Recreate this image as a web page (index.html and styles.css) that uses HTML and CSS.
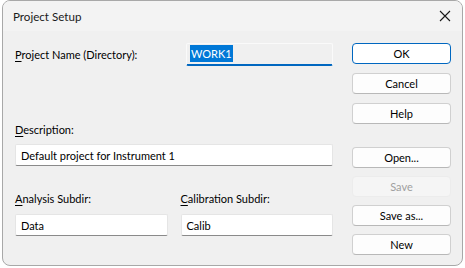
FILE: index.html
```html
<!DOCTYPE html>
<html lang="en">
<head>
  <meta charset="UTF-8" />
  <title>Project Setup</title>
  <link rel="stylesheet" href="styles.css">
</head>
<body>
  <div class="window">
    <div class="titlebar">
      <span class="title">Project Setup</span>
      <svg class="close" width="12" height="12" viewBox="0 0 12 12">
        <path d="M1 1 L11 11 M11 1 L1 11" stroke="#1a1a1a" stroke-width="1.1" fill="none" />
      </svg>
    </div>
    <div class="content">
      <div class="form">
        <div class="row-name">
          <label class="lbl"><u>P</u>roject Name (Directory):</label>
          <div class="field focused"><span class="sel">WORK1</span></div>
        </div>
        <label class="lbl desc-lbl"><u>D</u>escription:</label>
        <div class="field">Default project for Instrument 1</div>
        <div class="row-sub">
          <div class="col">
            <label class="lbl"><u>A</u>nalysis Subdir:</label>
            <div class="field">Data</div>
          </div>
          <div class="col">
            <label class="lbl"><u>C</u>alibration Subdir:</label>
            <div class="field">Calib</div>
          </div>
        </div>
      </div>
      <div class="buttons">
        <button class="btn default">OK</button>
        <button class="btn">Cancel</button>
        <button class="btn">Help</button>
        <button class="btn gap">Open...</button>
        <button class="btn" disabled>Save</button>
        <button class="btn">Save as...</button>
        <button class="btn">New</button>
      </div>
    </div>
  </div>
</body>
</html>
```

FILE: styles.css
```css
body {
  margin: 0;
  background: #ffffff;
  font-family: Lato, "Noto Sans", Arial, sans-serif;
  font-size: 11px;
  color: #000;
}
.window {
  margin: 0 2px;
  width: 459px;
  height: 264px;
  border: 1px solid #a8a8a8;
  border-radius: 8px;
  background: #f0f0f0;
  overflow: hidden;
}
.titlebar {
  height: 30px;
  background: #f3f3f3;
  display: flex;
  align-items: center;
  justify-content: space-between;
  padding: 0 10px 0 10px;
}
.title {
  font-size: 11.6px;
  color: #1a1a1a;
}
.close {
  margin-right: 1px;
}
.content {
  display: flex;
  padding: 12px 0 0 12px;
}
.form {
  width: 318px;
}
.lbl {
  display: block;
  line-height: 16px;
}
.lbl u {
  text-decoration-thickness: 1px;
  text-underline-offset: 2px;
}
.field {
  height: 22px;
  line-height: 21px;
  padding: 0 5px;
  background: #ffffff;
  border: 1px solid #e5e5e5;
  border-bottom-color: #8a8a8a;
  border-radius: 2px;
  box-sizing: border-box;
}
.row-name {
  display: flex;
  align-items: center;
  justify-content: space-between;
  height: 23px;
}
.row-name .field {
  width: 147px;
  height: 23px;
  background: #f0f0f0;
  border: 1px solid #fafafa;
  border-bottom: 2px solid #0067c0;
  padding: 0 3px;
  line-height: 19px;
}
.sel {
  background: #0078d7;
  color: #fff;
  padding: 2px 1px 2px 1px;
}
.desc-lbl {
  margin-top: 56px;
  margin-bottom: 6px;
}
.row-sub {
  display: flex;
  gap: 13px;
  margin-top: 25px;
}
.row-sub .col {
  flex: 1;
}
.row-sub .lbl {
  margin-bottom: 7px;
}
.buttons {
  margin-left: 19px;
  display: flex;
  flex-direction: column;
  gap: 9px;
}
.btn {
  width: 99px;
  height: 21px;
  padding: 0;
  font-family: Lato, "Noto Sans", Arial, sans-serif;
  font-size: 11px;
  color: #000;
  background: #fdfdfd;
  border: 1px solid #d0d0d0;
  border-bottom-color: #b8b8b8;
  border-radius: 4px;
}
.btn.default {
  border: 1px solid #0067c0;
  background: #fff;
}
.btn.gap {
  margin-top: 14px;
}
.btn:disabled {
  background: #f5f5f5;
  color: #a0a0a0;
  border-color: #ececec;
}
.buttons .btn:nth-child(n+4) {
  margin-bottom: -1px;
}
```
